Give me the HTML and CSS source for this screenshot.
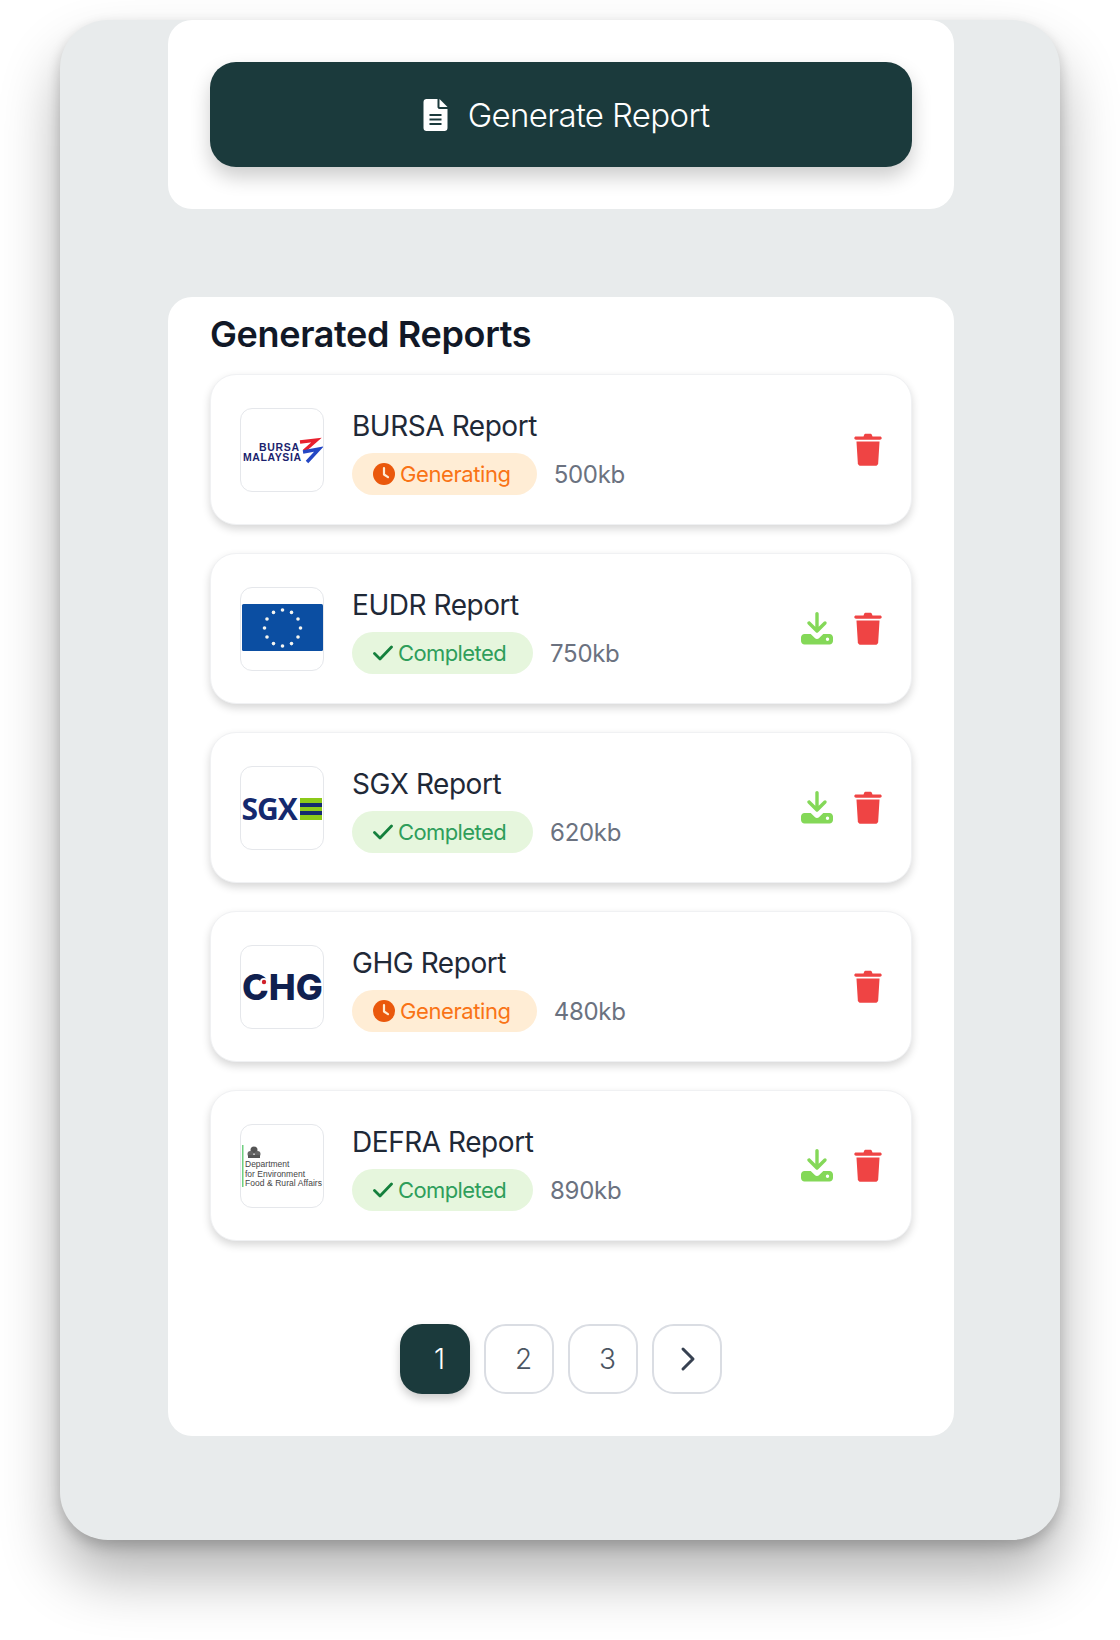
FILE: index.html
```html
<!DOCTYPE html>
<html lang="en">
<head>
    <meta charset="UTF-8">
    <meta name="viewport" content="width=device-width, initial-scale=1.0">
    <title>Generated Reports</title>
    <link rel="stylesheet" href="styles.css">
</head>
<body>
    <svg class="sprites" width="0" height="0" aria-hidden="true">
        <symbol id="icon-trash" viewBox="0 0 28 33">
            <path d="M10 2.200c.3-.9 1-1.400 2-1.400h4c1 0 1.700.5 2 1.400l.5 1.300h7.500c1 0 1.700.7 1.700 1.600S27 6.700 26 6.700H2C1 6.700.3 6 .3 5.100S1 3.500 2 3.500h7.500z"/>
            <path d="M2.500 8.500h23l-1.300 21.700c-.1 1.500-1.300 2.600-2.800 2.600H6.600c-1.500 0-2.700-1.100-2.800-2.600z"/>
        </symbol>
        <symbol id="icon-download" viewBox="0 0 32 33">
            <path d="M14.300 1.800c0-1 .8-1.800 1.700-1.800s1.700.8 1.700 1.800v13l5.100-5c.7-.7 1.800-.7 2.400 0s.7 1.800 0 2.400l-8 8c-.7.700-1.800.7-2.400 0l-8-8c-.7-.7-.7-1.800 0-2.400s1.800-.7 2.400 0l5.100 5z"/>
            <path fill-rule="evenodd" d="M3.500 22h6.200l4.100 4c1.200 1.200 3.200 1.200 4.400 0l4.100-4h6.200c1.900 0 3.500 1.600 3.500 3.500v3.500c0 1.900-1.600 3.500-3.500 3.500h-25C1.600 32.500 0 30.900 0 29v-3.500C0 23.600 1.600 22 3.500 22zM26.500 25.500a1.700 1.700 0 1 0 0 3.400 1.700 1.700 0 0 0 0-3.400z"/>
        </symbol>
        <symbol id="icon-clock" viewBox="0 0 22 22">
            <circle cx="11" cy="11" r="11" fill="#ea580c"/>
            <path d="M11 5v6.500l4 2.700" fill="none" stroke="#ffedd5" stroke-width="2.200" stroke-linecap="round" stroke-linejoin="round"/>
        </symbol>
        <symbol id="icon-check" viewBox="0 0 20 16">
            <path d="M1.500 8.500l5.500 5.500L18.500 2" fill="none" stroke="#15803d" stroke-width="2.800" stroke-linecap="round" stroke-linejoin="round"/>
        </symbol>
    </svg>

    <main class="panel">
        <section class="card generate-card">
            <button class="generate-btn">
                <svg class="doc-icon" viewBox="0 0 24 32">
                    <path fill-rule="evenodd" d="M3 0h11v8c0 1.100.9 2 2 2h8v19c0 1.700-1.300 3-3 3H3c-1.700 0-3-1.300-3-3V3c0-1.700 1.300-3 3-3zM6 15v2h12v-2zm0 4.500v2h12v-2zm0 4.500v2h12v-2z"/>
                    <path d="M16 0l8 8h-8z"/>
                </svg>
                Generate Report
            </button>
        </section>

        <section class="card reports-card">
            <h2>Generated Reports</h2>

            <div class="report-list">
                <article class="report">
                    <div class="logo">
                        <svg viewBox="0 0 82 82">
                            <text class="bursa-text" x="18" y="42" textLength="40">BURSA</text>
                            <text class="bursa-text" x="2" y="52" textLength="58">MALAYSIA</text>
                            <path d="M59 33l16.500-2-12.500 11" fill="none" stroke="#e8212e" stroke-width="3.400"/>
                            <path d="M62 43l16-3-12 13" fill="none" stroke="#2447c4" stroke-width="3.400"/>
                        </svg>
                    </div>
                    <div class="report-info">
                        <div class="report-name">BURSA Report</div>
                        <div class="report-meta">
                            <span class="badge badge-generating"><svg class="clock"><use href="#icon-clock"/></svg>Generating</span>
                            <span class="size">500kb</span>
                        </div>
                    </div>
                    <div class="actions">
                        <svg class="trash"><use href="#icon-trash"/></svg>
                    </div>
                </article>

                <article class="report">
                    <div class="logo">
                        <svg viewBox="0 0 82 82">
                            <rect x="1" y="16" width="81" height="47" rx="1.500" fill="#0b4ea2"/>
                            <g fill="#f5f5f0">
                                <circle cx="41.500" cy="22" r="1.800"/><circle cx="50.500" cy="24.400" r="1.800"/><circle cx="57" cy="31" r="1.800"/>
                                <circle cx="59.500" cy="40" r="1.800"/><circle cx="57" cy="49" r="1.800"/><circle cx="50.500" cy="55.600" r="1.800"/>
                                <circle cx="41.500" cy="58" r="1.800"/><circle cx="32.500" cy="55.600" r="1.800"/><circle cx="26" cy="49" r="1.800"/>
                                <circle cx="23.500" cy="40" r="1.800"/><circle cx="26" cy="31" r="1.800"/><circle cx="32.500" cy="24.400" r="1.800"/>
                            </g>
                        </svg>
                    </div>
                    <div class="report-info">
                        <div class="report-name">EUDR Report</div>
                        <div class="report-meta">
                            <span class="badge badge-completed"><svg class="check"><use href="#icon-check"/></svg>Completed</span>
                            <span class="size">750kb</span>
                        </div>
                    </div>
                    <div class="actions">
                        <svg class="download"><use href="#icon-download"/></svg>
                        <svg class="trash"><use href="#icon-trash"/></svg>
                    </div>
                </article>

                <article class="report">
                    <div class="logo">
                        <svg viewBox="0 0 82 82">
                            <text class="sgx-text" x="0.500" y="53">SGX</text>
                            <rect x="59" y="31" width="22" height="22" fill="#8cc919"/>
                            <rect x="59" y="36" width="22" height="4" fill="#14296e"/>
                            <rect x="59" y="44" width="22" height="4" fill="#14296e"/>
                        </svg>
                    </div>
                    <div class="report-info">
                        <div class="report-name">SGX Report</div>
                        <div class="report-meta">
                            <span class="badge badge-completed"><svg class="check"><use href="#icon-check"/></svg>Completed</span>
                            <span class="size">620kb</span>
                        </div>
                    </div>
                    <div class="actions">
                        <svg class="download"><use href="#icon-download"/></svg>
                        <svg class="trash"><use href="#icon-trash"/></svg>
                    </div>
                </article>

                <article class="report">
                    <div class="logo">
                        <svg viewBox="0 0 82 82">
                            <text class="chg-text" x="41.500" y="54" text-anchor="middle">CHG</text>
                            <circle cx="23" cy="36" r="4" fill="#fff"/>
                            <circle cx="23" cy="36" r="2.200" fill="#d0202a"/>
                        </svg>
                    </div>
                    <div class="report-info">
                        <div class="report-name">GHG Report</div>
                        <div class="report-meta">
                            <span class="badge badge-generating"><svg class="clock"><use href="#icon-clock"/></svg>Generating</span>
                            <span class="size">480kb</span>
                        </div>
                    </div>
                    <div class="actions">
                        <svg class="trash"><use href="#icon-trash"/></svg>
                    </div>
                </article>

                <article class="report">
                    <div class="logo">
                        <svg viewBox="0 0 82 82">
                            <rect x="1" y="20" width="1.500" height="42" fill="#6fcf7f"/>
                            <circle cx="13" cy="25" r="3.500" fill="#555"/>
                            <circle cx="9.500" cy="29" r="3" fill="#666"/>
                            <circle cx="16.500" cy="29" r="3" fill="#666"/>
                            <rect x="7" y="30" width="12" height="3" fill="#555"/>
                            <text class="defra-text" x="4" y="42">Department</text>
                            <text class="defra-text" x="4" y="52">for Environment</text>
                            <text class="defra-text" x="4" y="61" textLength="77">Food &amp; Rural Affairs</text>
                        </svg>
                    </div>
                    <div class="report-info">
                        <div class="report-name">DEFRA Report</div>
                        <div class="report-meta">
                            <span class="badge badge-completed"><svg class="check"><use href="#icon-check"/></svg>Completed</span>
                            <span class="size">890kb</span>
                        </div>
                    </div>
                    <div class="actions">
                        <svg class="download"><use href="#icon-download"/></svg>
                        <svg class="trash"><use href="#icon-trash"/></svg>
                    </div>
                </article>
            </div>

            <nav class="pagination">
                <a class="page active">1</a>
                <a class="page">2</a>
                <a class="page">3</a>
                <a class="page page-next">
                    <svg viewBox="0 0 16 26"><path d="M3 3l10 10L3 23" fill="none" stroke="#374151" stroke-width="3" stroke-linecap="round" stroke-linejoin="round"/></svg>
                </a>
            </nav>
        </section>
    </main>
</body>
</html>
```

FILE: styles.css
```css
* {
    box-sizing: border-box;
}
body {
    margin: 0;
    padding: 20px 60px 100px;
    background-color: #fff;
    font-family: Inter, "Noto Sans", sans-serif;
}
.sprites {
    display: block;
}
.panel {
    width: 1000px;
    height: 1520px;
    padding: 0 106px 0 108px;
    background: #e8ebec;
    border-radius: 48px;
    overflow: hidden;
    box-shadow: 0 6px 14px rgba(0, 0, 0, 0.2), 0 36px 60px rgba(0, 0, 0, 0.3);
}
.card {
    background: #fff;
    border-radius: 24px;
    padding: 42px;
}
.generate-card {
    height: 189px;
    margin-bottom: 88px;
}
.generate-btn {
    display: flex;
    align-items: center;
    justify-content: center;
    gap: 20px;
    width: 100%;
    height: 105px;
    padding-left: 16px;
    background: #1b3a3c;
    color: #fff;
    border: none;
    border-radius: 26px;
    font-family: inherit;
    font-size: 33px;
    font-weight: 300;
    letter-spacing: -0.65px;
    box-shadow: 0 10px 20px rgba(0, 0, 0, 0.2);
}
.doc-icon {
    width: 25px;
    height: 32px;
    fill: #fff;
}
.reports-card {
    height: 1139px;
    padding-top: 15px;
}
.reports-card h2 {
    margin: 0 0 18px;
    font-size: 36px;
    line-height: 44px;
    font-weight: 600;
    letter-spacing: -0.35px;
    color: #111827;
}
.report-list {
    display: flex;
    flex-direction: column;
    gap: 28px;
}
.report {
    display: flex;
    align-items: center;
    height: 151px;
    padding: 0 29px;
    background: #fff;
    border: 1px solid #f0f1f3;
    border-radius: 26px;
    box-shadow: 0 4px 8px rgba(0, 0, 0, 0.16);
}
.logo {
    flex: none;
    width: 84px;
    height: 84px;
    background: #fff;
    border: 1px solid #e5e7eb;
    border-radius: 12px;
    overflow: hidden;
}
.logo svg {
    display: block;
    width: 100%;
    height: 100%;
}
.bursa-text {
    font: 700 10.5px "Liberation Sans", sans-serif;
    fill: #1b1f6e;
}
.sgx-text {
    font: 700 30px "Open Sans", sans-serif;
    fill: #14296e;
    letter-spacing: -1px;
}
.chg-text {
    font: 800 36px Inter, sans-serif;
    fill: #10204f;
}
.defra-text {
    font: 400 8.5px "Liberation Sans", sans-serif;
    fill: #444;
}
.report-info {
    flex: 1;
    margin-left: 28px;
    padding-top: 4px;
}
.report-name {
    font-size: 28px;
    line-height: 36px;
    font-weight: 400;
    letter-spacing: -0.45px;
    color: #1f2937;
    margin-bottom: 9px;
}
.report-meta {
    display: flex;
    align-items: center;
    gap: 17px;
}
.badge {
    display: inline-flex;
    align-items: center;
    height: 42px;
    padding: 0 26px 0 21px;
    border-radius: 21px;
    font-size: 22px;
    letter-spacing: -0.4px;
}
.badge-generating {
    background: #ffedd5;
    color: #f97316;
}
.badge-completed {
    padding-right: 27px;
    background: #e6f6dd;
    color: #2f9e5b;
    letter-spacing: -0.6px;
}
.clock {
    width: 22px;
    height: 22px;
    margin-right: 5px;
}
.check {
    width: 20px;
    height: 16px;
    margin-right: 5px;
}
.size {
    font-size: 24px;
    letter-spacing: -0.3px;
    color: #6b7280;
}
.actions {
    display: flex;
    align-items: center;
    gap: 21px;
}
.trash {
    width: 28px;
    height: 33px;
    fill: #ef4444;
}
.download {
    width: 32px;
    height: 33px;
    fill: #84d858;
}
.pagination {
    display: flex;
    justify-content: center;
    gap: 14px;
    margin-top: 83px;
}
.page {
    display: flex;
    align-items: center;
    justify-content: center;
    width: 70px;
    height: 70px;
    padding-left: 9px;
    background: #fff;
    border: 2px solid #dadde3;
    border-radius: 22px;
    font-size: 28px;
    font-weight: 300;
    color: #4b5563;
}
.page.active {
    background: #1b3a3c;
    border-color: #1b3a3c;
    color: #fff;
    box-shadow: 0 5px 10px rgba(0, 0, 0, 0.2);
}
.page-next {
    padding-left: 2px;
}
.page-next svg {
    width: 16px;
    height: 26px;
}
```
